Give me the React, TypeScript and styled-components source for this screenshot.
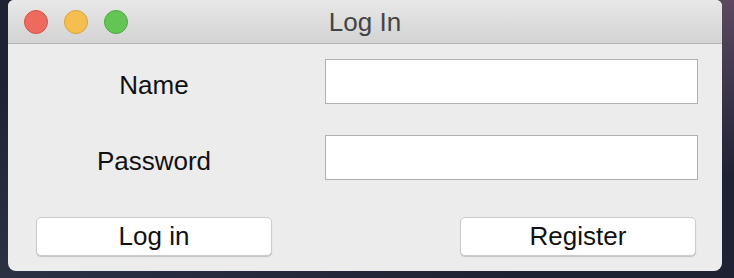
import styled, { createGlobalStyle } from "styled-components";

const GlobalStyle = createGlobalStyle`
  html, body {
    margin: 0;
    padding: 0;
  }
  body {
    font-family: "Liberation Sans", Arial, Helvetica, sans-serif;
  }
`;

const App = () => {
  return (
    <>
      <GlobalStyle />
      <Desktop>
        <Window>
          <TitleBar>
            <Lights>
              <Light color="#ee6a5f" edge="#d6524a" />
              <Light color="#f6be4f" edge="#dba23a" />
              <Light color="#62c554" edge="#4ea940" />
            </Lights>
            <Title>Log In</Title>
            <span />
          </TitleBar>
          <Body>
            <FieldRow>
              <Label>Name</Label>
              <TextInput type="text" />
            </FieldRow>
            <FieldRow>
              <Label>Password</Label>
              <TextInput type="password" />
            </FieldRow>
            <ButtonRow>
              <PushButton>Log in</PushButton>
              <PushButton>Register</PushButton>
            </ButtonRow>
          </Body>
        </Window>
      </Desktop>
    </>
  );
};

export default App;

const Desktop = styled.div`
  width: 734px;
  height: 278px;
  box-sizing: border-box;
  padding: 0 12px 0 8px;
  overflow: hidden;
  background:
    radial-gradient(ellipse at 100% 0%, #5b4a5e 0%, rgba(60, 50, 70, 0) 45%),
    radial-gradient(ellipse at 0% 100%, #2c3144 0%, rgba(30, 32, 48, 0) 50%),
    #1f2233;
`;

const Window = styled.div`
  width: 714px;
  height: 271px;
  display: flex;
  flex-direction: column;
  background: #ececec;
  border-radius: 6px 6px 8px 8px;
  overflow: hidden;
`;

const TitleBar = styled.div`
  height: 43px;
  flex-shrink: 0;
  display: grid;
  grid-template-columns: 1fr auto 1fr;
  align-items: center;
  padding: 0 16px;
  background: linear-gradient(to bottom, #e8e8e8, #d3d3d3);
  border-bottom: 1px solid #b3b3b3;
`;

const Lights = styled.div`
  display: flex;
  gap: 16px;
  padding-top: 1px;
`;

const Light = styled.span<{ color: string; edge: string }>`
  width: 24px;
  height: 24px;
  box-sizing: border-box;
  border-radius: 50%;
  background: ${({ color }) => color};
  border: 1px solid ${({ edge }) => edge};
`;

const Title = styled.div`
  font-size: 26px;
  color: #444;
  padding-top: 2px;
`;

const Body = styled.div`
  display: flex;
  flex-direction: column;
  gap: 31px;
  padding: 15px 24px 0 28px;
`;

const FieldRow = styled.div`
  display: grid;
  grid-template-columns: 236px 1fr;
  column-gap: 53px;
  align-items: center;
`;

const Label = styled.div`
  text-align: center;
  font-size: 26px;
  color: #111;
  padding-top: 7px;
`;

const TextInput = styled.input`
  height: 45px;
  box-sizing: border-box;
  margin: 0;
  border: 1px solid #b0b0b0;
  background: #fff;
  font-size: 22px;
  font-family: inherit;
  padding: 0 8px;
  outline: none;
`;

const ButtonRow = styled.div`
  display: flex;
  justify-content: space-between;
  padding-right: 2px;
  margin-top: 6px;
`;

const PushButton = styled.button`
  width: 236px;
  height: 39px;
  margin: 0;
  padding: 0 0 1px;
  background: #fff;
  border: 1px solid #cbcbcb;
  border-radius: 5px;
  box-shadow: 0 1px 1px rgba(0, 0, 0, 0.18);
  font-family: inherit;
  font-size: 26px;
  color: #111;
`;
